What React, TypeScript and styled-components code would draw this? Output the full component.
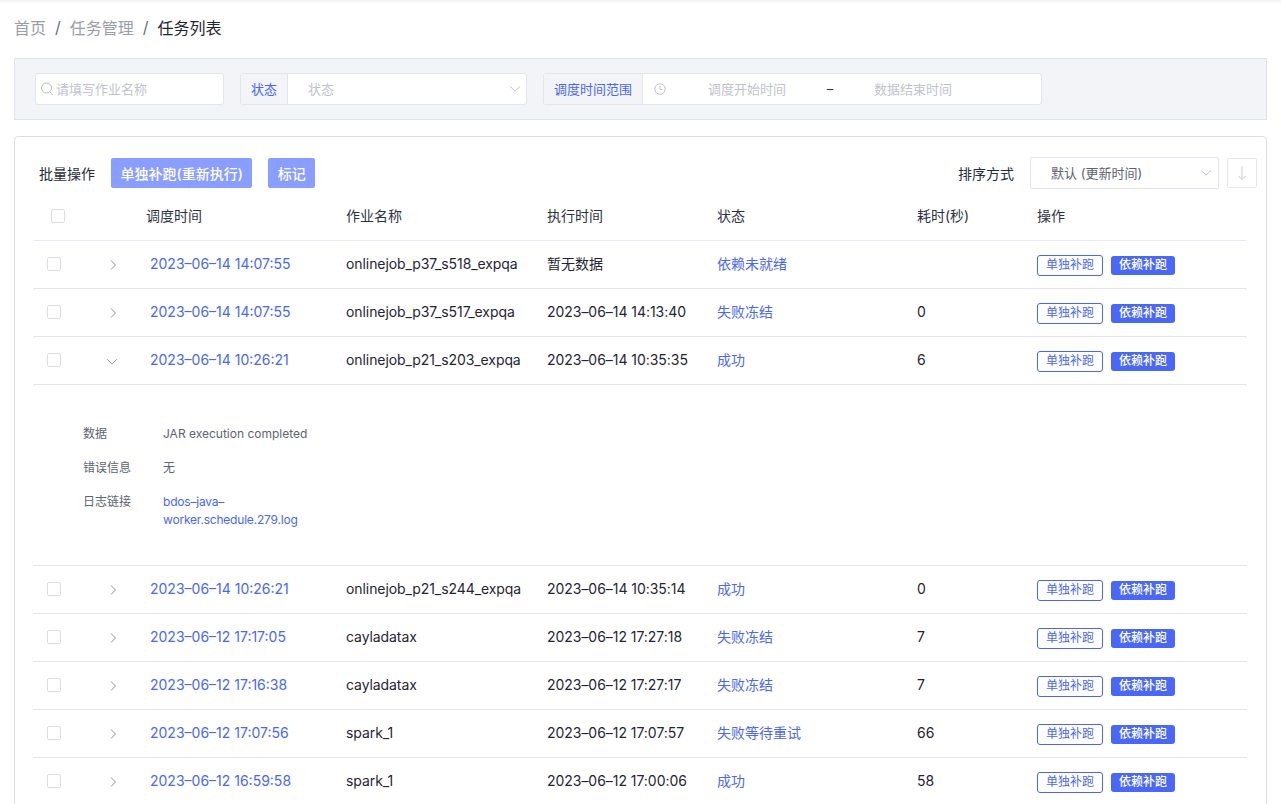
import React from 'react'
import styled, { createGlobalStyle } from 'styled-components'

const GlobalStyle = createGlobalStyle`
  html, body {
    margin: 0;
    padding: 0;
    height: 804px;
    overflow: hidden;
    background: #fff;
    font-family: Inter, "Noto Sans CJK SC", sans-serif;
    color: #1f2533;
  }
  * { box-sizing: border-box; }
`

const BLUE = '#4a67f5'
const COLUMNS = '64px 49px 200px 201px 170px 200px 120px 1fr'

const Page = styled.div`
  height: 804px;
  overflow: hidden;
  padding: 0 14px;
  box-shadow: inset 0 4px 4px -3px rgba(0, 0, 0, 0.08);
`

const Breadcrumb = styled.div`
  height: 58px;
  display: flex;
  align-items: center;
  font-size: 16px;
  color: #9a9ea9;
  padding-bottom: 5px;
`

const Crumb = styled.span<{ $current?: boolean }>`
  color: ${({ $current }) => ($current ? '#1f2533' : '#9a9ea9')};
`

const Slash = styled.span`
  margin: 0 9px;
  color: #6b7080;
`

const FilterPanel = styled.div`
  height: 62px;
  background: #f2f4f8;
  border: 1px solid #dfe1ec;
  display: flex;
  align-items: center;
  padding: 0 20px;
  gap: 16px;
`

const Field = styled.div<{ $width: number }>`
  width: ${({ $width }) => $width}px;
  height: 32px;
  background: #fff;
  border: 1px solid #e2e4ee;
  border-radius: 3px;
  display: flex;
  align-items: center;
  font-size: 13px;
  line-height: 18px;
  color: #c0c3cc;
`

const Addon = styled.div<{ $width: number }>`
  width: ${({ $width }) => $width}px;
  height: 100%;
  flex: none;
  background: #f2f4f8;
  border-right: 1px solid #e2e4ee;
  color: ${BLUE};
  display: flex;
  align-items: center;
  justify-content: center;
`

const SearchInner = styled.div`
  display: flex;
  align-items: center;
  gap: 2px;
  padding-left: 4px;
`

const SelectText = styled.span`
  padding-left: 20px;
  flex: 1;
`

const SelectArrow = styled.span`
  display: flex;
  margin-right: 4px;
`

const RangeIcon = styled.span`
  display: flex;
  margin: 0 2px 0 11px;
  flex: none;
`

const RangeText = styled.span`
  margin: 0 40px;
  flex: none;
`

const RangeDash = styled.span`
  color: #333a4a;
  width: 8px;
  text-align: center;
  flex: none;
`

const Card = styled.div`
  margin-top: 16px;
  height: 700px;
  border: 1px solid #dcdee4;
  border-radius: 4px;
  padding: 20px 19px 0 18px;
`

const Toolbar = styled.div`
  height: 31px;
  display: flex;
  align-items: center;
  font-size: 14px;
  padding-left: 6px;
  margin-right: -10px;
`

const ToolLabel = styled.span`
  margin-right: 16px;
  color: #262c3a;
`

const BatchButton = styled.div`
  height: 30px;
  padding: 0 9.5px;
  margin-right: 16px;
  background: #8a9eff;
  color: #fff;
  border-radius: 2px;
  font-size: 14px;
  font-weight: 500;
  display: flex;
  align-items: center;
`

const Spacer = styled.div`
  flex: 1;
`

const SortSelect = styled.div`
  width: 189px;
  height: 32px;
  border: 1px solid #e2e4ee;
  border-radius: 2px;
  font-size: 13px;
  color: #5b6170;
  display: flex;
  align-items: center;
  padding-left: 20px;
  justify-content: space-between;
  padding-right: 6px;
`

const SortButton = styled.div`
  width: 30px;
  height: 30px;
  margin-left: 8px;
  border: 1px solid #e6e7ee;
  border-radius: 2px;
  display: flex;
  align-items: center;
  justify-content: center;
`

const Row = styled.div`
  display: grid;
  grid-template-columns: ${COLUMNS};
  align-items: center;
  height: 48px;
  padding-bottom: 2px;
  border-bottom: 1px solid #e4e5e9;
  font-size: 14px;
  line-height: 20px;
  color: #1f2533;
`

const HeadRow = styled(Row)`
  height: 53px;
  padding: 3px 0 0;
  border-bottom-color: #e9ebf4;
  color: #2c3242;
`

const Box = styled.span<{ $offset: number }>`
  display: block;
  width: 14px;
  height: 14px;
  margin-left: ${({ $offset }) => $offset}px;
  border: 1px solid #dcdde3;
  border-radius: 2px;
  background: #fff;
`

const Expander = styled.span<{ $open?: boolean }>`
  display: flex;
  margin-left: ${({ $open }) => ($open ? '9px' : '12px')};
  padding-top: ${({ $open }) => ($open ? '4px' : '3px')};
`

const TimeLink = styled.span`
  color: ${BLUE};
  padding-left: 4px;
`

const JobName = styled.span`
  letter-spacing: -0.08px;
`

const ExecTime = styled.span`
  letter-spacing: -0.04px;
`

const Status = styled.span`
  color: ${BLUE};
`

const Actions = styled.div`
  display: flex;
  align-items: center;
  gap: 8px;
  padding-top: 3px;
`

const Tag = styled.span<{ $solid?: boolean }>`
  height: ${({ $solid }) => ($solid ? '19px' : '21px')};
  padding: 0 8px;
  border-radius: 3px;
  font-size: 12px;
  display: flex;
  align-items: center;
  color: ${({ $solid }) => ($solid ? '#fff' : BLUE)};
  background: ${({ $solid }) => ($solid ? BLUE : '#fff')};
  border: ${({ $solid }) => ($solid ? 'none' : `1px solid ${BLUE}`)};
  font-weight: ${({ $solid }) => ($solid ? 500 : 400)};
`

const Detail = styled.div`
  height: 181px;
  border-bottom: 1px solid #e4e5e9;
  padding: 40px 0 0 50px;
  font-size: 12px;
  display: grid;
  grid-template-columns: 80px 160px;
  grid-auto-rows: min-content;
  row-gap: 16px;
  line-height: 18px;
  align-content: start;
  color: #5d6472;
`

const DetailValue = styled.span`
  white-space: nowrap;
`

const DetailLink = styled.span`
  color: ${BLUE};
  letter-spacing: -0.2px;
`

const ChevronRight = () => (
  <svg width="8" height="12" viewBox="0 0 8 12" fill="none" stroke="#8f929c" strokeWidth="1">
    <path d="M2 1.5 L6.5 6 L2 10.5" />
  </svg>
)

const ChevronDown = ({ color = '#8f929c', width = 12 }: { color?: string; width?: number }) => (
  <svg width={width} height="8" viewBox="0 0 12 8" fill="none" stroke={color} strokeWidth="1">
    <path d="M1 1.2 L6 6.2 L11 1.2" />
  </svg>
)

const SearchIcon = () => (
  <svg width="14" height="16" viewBox="0 0 14 16" fill="none" stroke="#b9bcc6" strokeWidth="1">
    <circle cx="6.5" cy="7" r="5" />
    <path d="M10 11 L12.5 14" />
  </svg>
)

const ClockIcon = () => (
  <svg width="12" height="12" viewBox="0 0 12 12" fill="none" stroke="#c0c3cc" strokeWidth="1">
    <circle cx="6" cy="6" r="5.2" />
    <path d="M6 3 V6.3 H8.4" />
  </svg>
)

const DownArrowIcon = () => (
  <svg width="10" height="16" viewBox="0 0 10 16" fill="none" stroke="#dcdde3" strokeWidth="1.4">
    <path d="M5 1 V14" />
    <path d="M1.5 11 L5 14.5 L8.5 11" />
  </svg>
)

interface Task {
  time: string
  name: string
  exec: string
  status: string
  cost: string
  open?: boolean
}

const TASKS: Task[] = [
  { time: '2023–06–14 14:07:55', name: 'onlinejob_p37_s518_expqa', exec: '暂无数据', status: '依赖未就绪', cost: '' },
  { time: '2023–06–14 14:07:55', name: 'onlinejob_p37_s517_expqa', exec: '2023–06–14 14:13:40', status: '失败冻结', cost: '0' },
  { time: '2023–06–14 10:26:21', name: 'onlinejob_p21_s203_expqa', exec: '2023–06–14 10:35:35', status: '成功', cost: '6', open: true },
  { time: '2023–06–14 10:26:21', name: 'onlinejob_p21_s244_expqa', exec: '2023–06–14 10:35:14', status: '成功', cost: '0' },
  { time: '2023–06–12 17:17:05', name: 'cayladatax', exec: '2023–06–12 17:27:18', status: '失败冻结', cost: '7' },
  { time: '2023–06–12 17:16:38', name: 'cayladatax', exec: '2023–06–12 17:27:17', status: '失败冻结', cost: '7' },
  { time: '2023–06–12 17:07:56', name: 'spark_1', exec: '2023–06–12 17:07:57', status: '失败等待重试', cost: '66' },
  { time: '2023–06–12 16:59:58', name: 'spark_1', exec: '2023–06–12 17:00:06', status: '成功', cost: '58' },
]

export default function App() {
  return (
    <Page>
      <GlobalStyle />
      <Breadcrumb>
        <Crumb>首页</Crumb>
        <Slash>/</Slash>
        <Crumb>任务管理</Crumb>
        <Slash>/</Slash>
        <Crumb $current>任务列表</Crumb>
      </Breadcrumb>

      <FilterPanel>
        <Field $width={189}>
          <SearchInner>
            <SearchIcon />
            <span>请填写作业名称</span>
          </SearchInner>
        </Field>
        <Field $width={287}>
          <Addon $width={47}>状态</Addon>
          <SelectText>状态</SelectText>
          <SelectArrow>
            <ChevronDown color="#c0c3cc" width={14} />
          </SelectArrow>
        </Field>
        <Field $width={499}>
          <Addon $width={99}>调度时间范围</Addon>
          <RangeIcon>
            <ClockIcon />
          </RangeIcon>
          <RangeText>调度开始时间</RangeText>
          <RangeDash>–</RangeDash>
          <RangeText>数据结束时间</RangeText>
        </Field>
      </FilterPanel>

      <Card>
        <Toolbar>
          <ToolLabel>批量操作</ToolLabel>
          <BatchButton>单独补跑(重新执行)</BatchButton>
          <BatchButton>标记</BatchButton>
          <Spacer />
          <ToolLabel>排序方式</ToolLabel>
          <SortSelect>
            <span>默认 (更新时间)</span>
            <ChevronDown color="#c0c3cc" />
          </SortSelect>
          <SortButton>
            <DownArrowIcon />
          </SortButton>
        </Toolbar>

        <HeadRow>
          <Box $offset={18} />
          <span />
          <span>调度时间</span>
          <span>作业名称</span>
          <span>执行时间</span>
          <span>状态</span>
          <span>耗时(秒)</span>
          <span>操作</span>
        </HeadRow>

        {TASKS.map((task, i) => (
          <React.Fragment key={i}>
            <Row>
              <Box $offset={14} />
              <Expander $open={task.open}>{task.open ? <ChevronDown /> : <ChevronRight />}</Expander>
              <TimeLink>{task.time}</TimeLink>
              <JobName>{task.name}</JobName>
              <ExecTime>{task.exec}</ExecTime>
              <Status>{task.status}</Status>
              <span>{task.cost}</span>
              <Actions>
                <Tag>单独补跑</Tag>
                <Tag $solid>依赖补跑</Tag>
              </Actions>
            </Row>
            {task.open && (
              <Detail>
                <span>数据</span>
                <DetailValue>JAR execution completed</DetailValue>
                <span>错误信息</span>
                <span>无</span>
                <span>日志链接</span>
                <DetailLink>bdos–java–<br />worker.schedule.279.log</DetailLink>
              </Detail>
            )}
          </React.Fragment>
        ))}
      </Card>
    </Page>
  )
}
